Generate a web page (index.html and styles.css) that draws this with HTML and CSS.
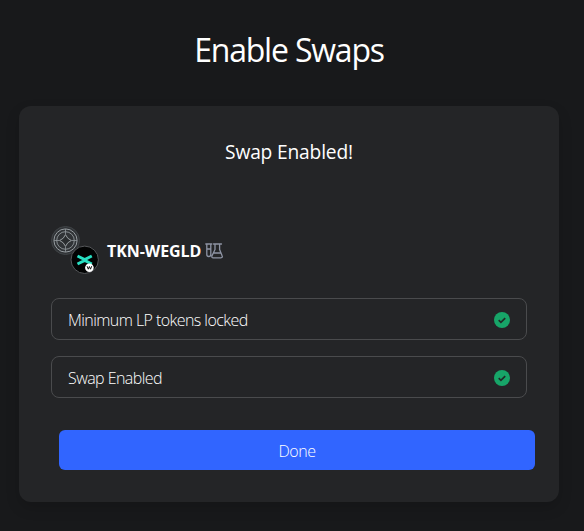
FILE: index.html
```html
<!DOCTYPE html>
<html lang="en">
<head>
<meta charset="utf-8">
<title>Enable Swaps</title>
<link rel="stylesheet" href="styles.css">
</head>
<body>
<main class="page">
  <h1 class="title">Enable Swaps</h1>
  <section class="card">
    <h2 class="subtitle">Swap Enabled!</h2>
    <div class="pair">
      <svg class="tokens" width="50" height="50" viewBox="0 0 50 50" fill="none">
        <circle cx="15.5" cy="15.5" r="14" fill="#303336" stroke="#404447"/>
        <circle cx="15.5" cy="15.5" r="11.6" stroke="#969ca0"/>
        <circle cx="15.5" cy="15.5" r="8.8" stroke="#92989c" stroke-width=".9"/>
        <path d="M15.5 9Q17.3 13.7 22 15.5Q17.3 17.3 15.5 22Q13.7 17.3 9 15.5Q13.7 13.7 15.5 9Z" fill="#292c2e" stroke="#a3a9ac" transform="translate(15.5 15.5) scale(.9) translate(-15.5 -15.5)"/>
        <path d="M15.5 4v5.5M15.5 21.5v5.5M4 15.5h5.5M21.5 15.5h5.5" stroke="#92989c" stroke-width=".8"/>
        <circle cx="34.7" cy="34.8" r="13.7" fill="#020303" stroke="#55575a"/>
        <path d="M27.5 31L34.7 34.5L41.8 31M27.5 39L34.7 35.5L41.8 39" stroke="#28dfc2" stroke-width="3"/>
        <circle cx="39.4" cy="42.7" r="4.3" fill="#fff"/>
        <path d="M37.1 41.2l1.2 3 1.1-2.7 1.1 2.7 1.2-3" stroke="#111" stroke-width="1"/>
      </svg>
      <strong class="pair-name">TKN-WEGLD</strong>
      <svg class="flask" width="18" height="16" viewBox="0 0 18 16" fill="none" stroke="#8e94a4" stroke-width="1.3" stroke-linecap="round" stroke-linejoin="round">
        <path d="M.8 1h6M1.8 1v10.5a2 2 0 0 0 4 0V1M1.8 6h4M8.5 1h8M10 1v5.5L6.9 13Q6.5 14.8 8.2 14.8h7.7q2-.2 1.2-2L14.6 6.5V1M8.7 10h7"/>
      </svg>
    </div>
    <ul class="steps">
      <li class="step"><span>Minimum LP tokens locked</span>
        <svg width="16" height="16" viewBox="0 0 16 16"><circle cx="8" cy="8" r="8" fill="#17a568"/><path d="M4.7 8.2l2.2 2.1 4.3-4.2" fill="none" stroke="#202b27" stroke-width="1.7"/></svg>
      </li>
      <li class="step"><span>Swap Enabled</span>
        <svg width="16" height="16" viewBox="0 0 16 16"><circle cx="8" cy="8" r="8" fill="#17a568"/><path d="M4.7 8.2l2.2 2.1 4.3-4.2" fill="none" stroke="#202b27" stroke-width="1.7"/></svg>
      </li>
    </ul>
    <button class="done" type="button">Done</button>
  </section>
</main>
</body>
</html>
```
FILE: styles.css
```css
* { box-sizing: border-box; }
body {
  margin: 0;
  background: #18191b;
  color: #fff;
  font-family: "Segoe UI", "Open Sans", "Noto Sans", sans-serif;
  font-size: 16px;
  font-weight: 300;
}
.page { height: 531px; padding: 30px 25px 0 19px; overflow: hidden; }
.title { margin: 0 0 36px; font-size: 32px; line-height: 40px; font-weight: 400; text-align: center; letter-spacing: -1.2px; }
.card {
  height: 396px;
  padding: 32px;
  border-radius: 12px;
  background: #242527;
  box-shadow: 0 6px 14px rgba(0, 0, 0, .15);
}
.subtitle { margin: 0 0 60px; font-size: 19.2px; line-height: 28px; font-weight: 400; text-align: center; letter-spacing: -0.17px; }
.pair { display: flex; align-items: center; height: 50px; margin-top: -1px; }
.tokens { margin: 0 7px 0 -1px; }
.pair-name { padding-top: 2px; font-size: 16px; font-weight: 700; letter-spacing: -0.07px; }
.flask { margin: 2px 0 0 4px; }
.steps { display: grid; gap: 16px; margin: 23px 0 32px; padding: 0; list-style: none; }
.step {
  display: flex;
  align-items: center;
  justify-content: space-between;
  height: 42px;
  padding: 2px 16px 0;
  border: 1px solid #4a4b4d;
  border-radius: 8px;
}
.step svg { margin-top: -1px; }
.step span { letter-spacing: -0.56px; }
.done {
  display: block;
  width: 476px;
  height: 40px;
  margin-left: 8px;
  padding: 2px 0 0;
  border: 0;
  border-radius: 6px;
  background: #3165ff;
  color: #fff;
  font: inherit;
  letter-spacing: -0.5px;
}
```
